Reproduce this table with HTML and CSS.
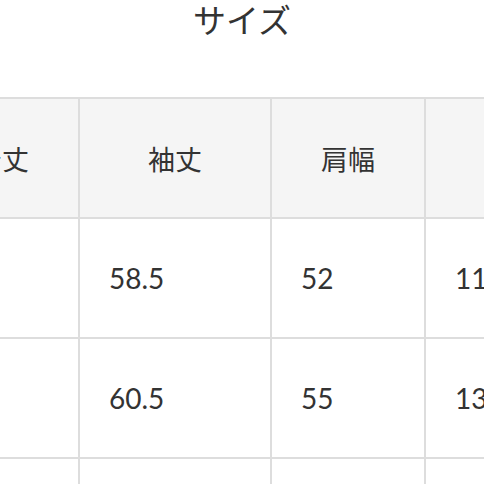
FILE: index.html
```html
<!DOCTYPE html>
<html lang="ja">
<head>
<meta charset="utf-8">
<title>サイズ</title>
<link rel="stylesheet" href="styles.css">
</head>
<body>
<h1 class="title">サイズ</h1>
<div class="size-table">
  <div class="cell head">着丈</div>
  <div class="cell head">袖丈</div>
  <div class="cell head">肩幅</div>
  <div class="cell head">身幅</div>

  <div class="cell">74</div>
  <div class="cell">58.5</div>
  <div class="cell">52</div>
  <div class="cell">118</div>

  <div class="cell">76</div>
  <div class="cell">60.5</div>
  <div class="cell">55</div>
  <div class="cell">130</div>

  <div class="cell">78</div>
  <div class="cell">62.5</div>
  <div class="cell">58</div>
  <div class="cell">140</div>
</div>
</body>
</html>
```
FILE: styles.css
```css
html, body {
  margin: 0;
  padding: 0;
  background: #ffffff;
  overflow: hidden;
}

body {
  width: 484px;
  height: 484px;
  color: #333333;
  font-family: Lato, "Noto Sans CJK JP", sans-serif;
}

.title {
  margin: 0;
  height: 97px;
  line-height: 38px;
  font-family: "Noto Sans CJK JP", sans-serif;
  font-size: 33px;
  font-weight: normal;
  text-align: center;
  color: #333333;
}

.size-table {
  display: grid;
  grid-template-columns: 154px 192px 154px 192px;
  grid-auto-rows: 120px;
  margin-left: -76px;
  width: max-content;
  border-top: 2px solid #dddddd;
  border-left: 2px solid #dddddd;
}

.cell {
  box-sizing: border-box;
  display: flex;
  align-items: center;
  padding-left: 29px;
  border-right: 2px solid #dddddd;
  border-bottom: 2px solid #dddddd;
  font-family: Lato, "Noto Sans CJK JP", sans-serif;
  font-size: 28px;
  color: #333333;
  white-space: nowrap;
}

.head {
  justify-content: center;
  padding-left: 0;
  background: #f5f5f5;
  font-family: "Noto Sans CJK JP", sans-serif;
  font-size: 27px;
}
```
